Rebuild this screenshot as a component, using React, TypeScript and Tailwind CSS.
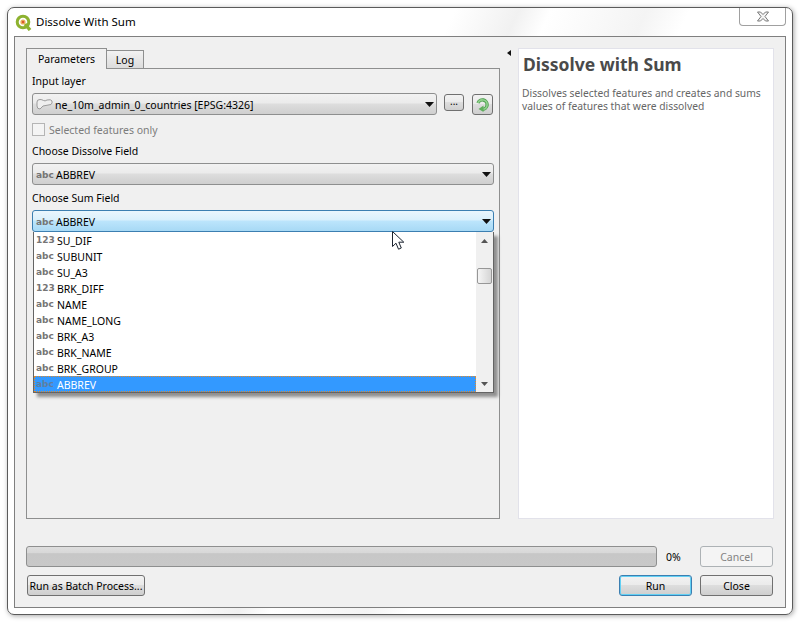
const font = "font-['Noto_Sans','Liberation_Sans',sans-serif]";

const fields: [string, string][] = [
  ["123", "SU_DIF"],
  ["abc", "SUBUNIT"],
  ["abc", "SU_A3"],
  ["123", "BRK_DIFF"],
  ["abc", "NAME"],
  ["abc", "NAME_LONG"],
  ["abc", "BRK_A3"],
  ["abc", "BRK_NAME"],
  ["abc", "BRK_GROUP"],
];

function Arrow() {
  return (
    <svg width="9" height="5" viewBox="0 0 9 5" className="shrink-0">
      <path d="M0 0h9L4.500 5z" fill="#111" />
    </svg>
  );
}

function Tag({ t, dim, nudge }: { t: string; dim?: boolean; nudge?: boolean }) {
  return (
    <span className={`w-[21px] shrink-0 font-['DejaVu_Sans',sans-serif] text-[9px] font-bold leading-none ${nudge ? "mt-[2px]" : ""} ${dim ? "text-[#5f7f9f]" : "text-[#757575]"}`}>{t}</span>
  );
}

function Combo({ children, active, className }: { children: React.ReactNode; active?: boolean; className?: string }) {
  return (
    <div
      className={`flex h-[22px] shrink-0 items-center rounded-[3px] border pr-[2px] ${
        active
          ? "border-[#3c7fb1] bg-[linear-gradient(#eaf6fd_0%,#d9f0fc_45%,#bce5fc_50%,#a7d9f5_100%)]"
          : "border-[#8e8f8f] bg-[linear-gradient(#f2f2f2_0%,#ebebeb_45%,#dddddd_50%,#cfcfcf_100%)]"
      } ${className ?? ""}`}
    >
      <div className="flex min-w-0 flex-1 items-center pl-[3px] text-[10.5px] text-black">{children}</div>
      <Arrow />
    </div>
  );
}

function Btn({ children, className }: { children: React.ReactNode; className?: string }) {
  return (
    <div
      className={`flex h-[21px] shrink-0 items-center justify-center whitespace-nowrap rounded-[3px] border border-[#707070] bg-[linear-gradient(#f2f2f2_0%,#ebebeb_45%,#dddddd_50%,#cfcfcf_100%)] pt-[2px] text-[10.5px] text-black ${className ?? ""}`}
    >
      {children}
    </div>
  );
}

function Logo() {
  return (
    <svg width="17" height="17" viewBox="0 0 17 17" className="shrink-0">
      <circle cx="8" cy="8" r="5.800" fill="#fff" stroke="#8db22f" strokeWidth="3" />
      <path d="M10 10l5 6" stroke="#8db22f" strokeWidth="3.400" />
      <circle cx="8" cy="8" r="2.600" fill="#eab05a" />
      <circle cx="8" cy="8" r="1.200" fill="#d8552c" />
    </svg>
  );
}

function Refresh() {
  return (
    <svg width="15" height="15" viewBox="0 0 15 15">
      <path d="M3 6a4.700 4.700 0 1 1 4.500 6.300" fill="none" stroke="#4f9f4f" strokeWidth="3.400" />
      <path d="M3 6a4.700 4.700 0 1 1 4.500 6.300" fill="none" stroke="#8fd08c" strokeWidth="1.600" />
      <path d="M8.500 8.500L3.500 12l5 3z" fill="#5fae5c" />
    </svg>
  );
}

function LayerIcon() {
  return (
    <svg width="17" height="12" viewBox="0 0 17 12" className="mr-[2px] shrink-0">
      <path d="M1 4q0-2.500 3-2.500q2 0 3.500 1t3.500-.5q4-1 5 1q.6 2-1 3.500l-8 1.500l-3 3q-3 0-3-3z" fill="#efefef" stroke="#9b9b9b" />
    </svg>
  );
}

function Cursor() {
  return (
    <svg width="14" height="20" viewBox="0 0 14 20" className="absolute left-[392px] top-[231px]">
      <path d="M.5.5v15l3.500-3.300 2.500 6 2.800-1.200-2.500-5.800h5z" fill="#fff" stroke="#1c2430" strokeWidth="1" />
    </svg>
  );
}

export default function App() {
  return (
    <div className={`relative h-[625px] w-[803px] overflow-hidden bg-white pl-[7px] pt-[7px] ${font}`}>
      <div className="flex h-[608px] w-[786px] flex-col rounded-[7px] border border-[#5b5b5b] bg-[linear-gradient(115deg,#ffffff_0%,#ffffff_42%,#f1f1f1_48%,#ffffff_51%,#f4f4f4_60%,#ffffff_64%,#ffffff_100%)] shadow-[1px_1px_5px_rgba(0,0,0,0.35)]">
        <div className="flex h-[28px] shrink-0 items-center pl-[7px] pr-[6px]">
          <Logo />
          <span className="ml-[4px] text-[11.5px] text-black">Dissolve With Sum</span>
          <div className="ml-auto flex h-[18px] w-[47px] items-center justify-center self-start rounded-b-[4px] border border-t-0 border-[#a0a0a0] bg-white">
            <svg width="14" height="11" viewBox="0 0 14 11">
              <path d="M1.500 1h3l2.500 2.500L9.500 1h3L9 5.500l3.500 4.500h-3L7 7.500 4.500 10h-3L5 5.500z" fill="#f4f4f4" stroke="#777" />
            </svg>
          </div>
        </div>

        <div className="mx-[6px] mb-[6px] flex min-h-0 flex-1 flex-col border border-[#7f7f7f] bg-[#f0f0f0] px-[11px] pt-[11px]">
          <div className="flex h-[471px] shrink-0">
            <div className="flex w-[474px] shrink-0 flex-col">
              <div className="flex h-[20px] shrink-0 items-end text-[10.5px] text-black">
                <div className="z-10 -mb-[1px] flex h-[21px] w-[81px] items-center justify-center border border-b-0 border-[#8e8f8f] bg-[#f0f0f0] pt-[2px]">Parameters</div>
                <div className="flex h-[18px] w-[37px] items-center justify-center border border-b-0 border-l-0 border-[#8e8f8f] bg-[linear-gradient(#f2f2f2,#dcdcdc)] pt-[2px]">Log</div>
              </div>
              <div className="flex h-[451px] flex-col border border-[#8e8f8f] px-[5px] text-[10.5px] text-black">
                <div className="flex h-[24px] shrink-0 items-center pt-[2px]">Input layer</div>
                <div className="flex items-start">
                  <Combo className="w-[405px]">
                    <LayerIcon />
                    <span className="mt-[4px]">ne_10m_admin_0_countries [EPSG:4326]</span>
                  </Combo>
                  <Btn className="ml-[7px] mt-[1px] !h-[17px] w-[20px] !items-end !pt-0 pb-[1px] text-[10px] text-[#333]">...</Btn>
                  <Btn className="ml-[8px] mt-[1px] w-[21px] !pt-0">
                    <Refresh />
                  </Btn>
                </div>
                <div className="mt-[8px] flex h-[13px] shrink-0 items-center text-[#7c7c7c]">
                  <span className="mr-[4px] h-[13px] w-[13px] border border-[#b5b5b5] bg-[#f4f4f4]" />
                  <span className="mt-[2px]">Selected features only</span>
                </div>
                <div className="mt-[5px] flex h-[20px] shrink-0 items-center pt-[2px]">Choose Dissolve Field</div>
                <Combo className="mt-[2px] w-[462px]">
                  <Tag t="abc" nudge />
                  <span className="-ml-[1px] mt-[4px]">ABBREV</span>
                </Combo>
                <div className="mt-[3px] flex h-[20px] shrink-0 items-center pt-[2px]">Choose Sum Field</div>
                <Combo active className="mt-[2px] w-[462px]">
                  <Tag t="abc" nudge />
                  <span className="-ml-[1px] mt-[4px]">ABBREV</span>
                </Combo>
              </div>
            </div>
            <div className="flex w-[18px] shrink-0 justify-center pt-[2px]">
              <svg width="4" height="6" viewBox="0 0 4 6" className="mr-[1px]">
                <path d="M4 0v6L0 3z" fill="#111" />
              </svg>
            </div>
            <div className="w-[256px] border border-[#e2e2ea] bg-white px-[4px] pt-[3px]">
              <div className="text-[17.5px] font-bold leading-[24px] text-[#4a4a4a]">Dissolve with Sum</div>
              <p className="-ml-[1px] mt-[11px] text-[10.3px] leading-[13px] text-[#666]">
                Dissolves selected features and creates and sums values of features that were dissolved
              </p>
            </div>
          </div>

          <div className="mt-[27px] flex items-center text-[10.5px]">
            <div className="h-[21px] w-[631px] rounded-[3px] border border-[#8e8f8f] bg-[linear-gradient(#dedede_0%,#d8d8d8_30%,#c7c7c7_35%,#c8c8c8_100%)]" />
            <span className="ml-[9px] mt-[2px] w-[34px] text-black">0%</span>
            <Btn className="w-[73px] !border-[#adb2b5] !bg-none bg-[#f4f4f4] !text-[#838383]">Cancel</Btn>
          </div>
          <div className="mt-[8px] flex items-center pr-[1px]">
            <Btn className="ml-[1px] w-[118px]">Run as Batch Process...</Btn>
            <Btn className="ml-auto w-[73px] !border-[#3c7fb1] shadow-[inset_0_0_0_1px_#62d0f4]">Run</Btn>
            <Btn className="ml-[8px] w-[73px]">Close</Btn>
          </div>
        </div>
      </div>

      <div className="absolute left-[33px] top-[232px] flex h-[161px] w-[461px] border border-t-0 border-[#646464] bg-white text-[10.5px] text-black shadow-[4px_4px_3px_rgba(0,0,0,0.4)]">
        <div className="flex min-w-0 flex-1 flex-col">
          {fields.map(([t, n]) => (
            <div key={n} className="flex h-[16px] items-center pl-[2px]">
              <Tag t={t} />
              <span className="mt-[4px]">{n}</span>
            </div>
          ))}
          <div className="flex h-[16px] items-center bg-[#3399ff] pl-[2px] text-white outline-1 -outline-offset-1 outline-dotted outline-[#e08a2c]">
            <Tag t="abc" dim />
            <span className="mt-[4px]">ABBREV</span>
          </div>
        </div>
        <div className="flex w-[17px] shrink-0 flex-col items-center bg-[#f0f0f0]">
          <svg width="7" height="4" viewBox="0 0 7 4" className="mt-[7px]">
            <path d="M3.500 0L7 4H0z" fill="#555" />
          </svg>
          <div className="mt-[25px] h-[16px] w-[15px] rounded-[2px] border border-[#979797] bg-[linear-gradient(90deg,#f5f5f5,#d5d5d5)]" />
          <svg width="7" height="4" viewBox="0 0 7 4" className="mb-[6px] mt-auto">
            <path d="M0 0h7L3.500 4z" fill="#555" />
          </svg>
        </div>
      </div>
      <Cursor />
    </div>
  );
}
